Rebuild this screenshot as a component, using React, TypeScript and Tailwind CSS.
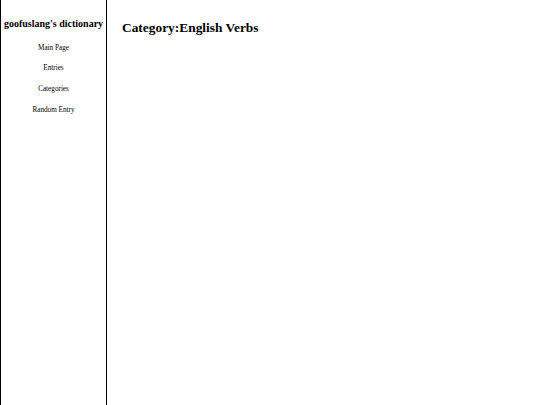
export default function App() {
  return (
    <div className="flex w-[540px] h-[405px] bg-white text-black" style={{ fontFamily: '"Liberation Serif", serif' }}>
      <div className="w-[107px] h-[405px] border-l border-r border-black flex flex-col items-center shrink-0">
        <div className="mt-[17px] text-[10px] font-bold leading-[14px] whitespace-nowrap">goofuslang's dictionary</div>
        <div className="mt-[12.5px] flex flex-col items-center gap-[11.8px] text-[7.2px] leading-[9px]">
          <span>Main Page</span>
          <span>Entries</span>
          <span>Categories</span>
          <span>Random Entry</span>
        </div>
      </div>
      <div className="pl-[15px] pt-[19px]">
        <h1 className="text-[13.4px] font-bold leading-[18px] whitespace-nowrap">Category:English Verbs</h1>
      </div>
    </div>
  );
}
